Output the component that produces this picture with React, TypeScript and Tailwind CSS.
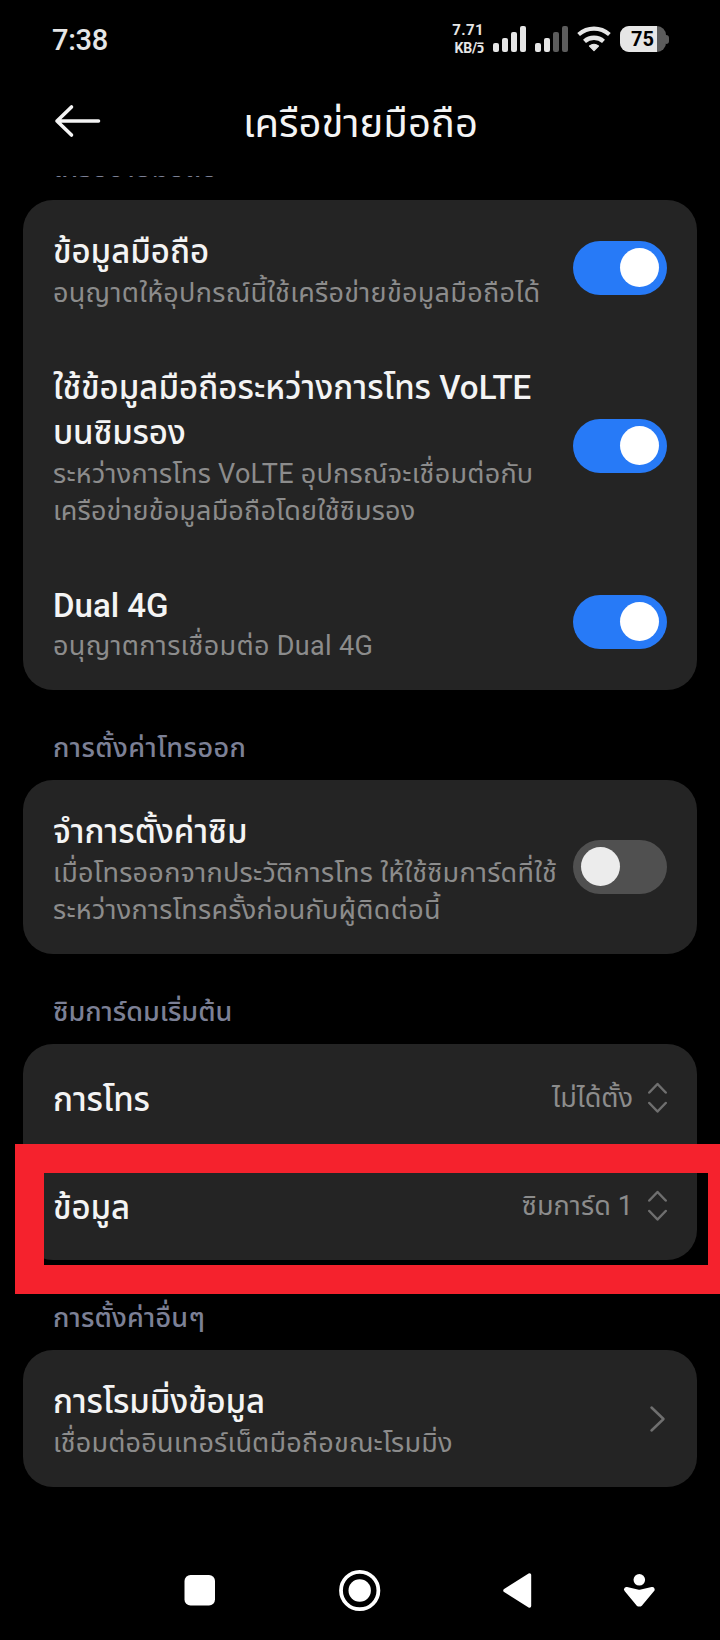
import React from 'react';

function Line({ children, className = '' }: { children: React.ReactNode; className?: string }) {
  return <div className={`whitespace-nowrap ${className}`}>{children}</div>;
}

function Toggle({ on = false, className = '' }: { on?: boolean; className?: string }) {
  return (
    <div
      role="switch"
      aria-checked={on}
      className={`flex h-[54px] w-[94px] shrink-0 rounded-full px-2 pt-[7px] ${on ? 'justify-end bg-[#277af7]' : 'justify-start bg-[#505050]'} ${className}`}
    >
      <div className={`h-[39px] w-[39px] rounded-full ${on ? 'bg-white' : 'bg-[#ececec]'}`} />
    </div>
  );
}

function UpDown() {
  return (
    <svg className="ml-[14px] h-8 w-5 shrink-0" viewBox="0 0 20 32" fill="none" stroke="#6f6f6f" strokeWidth="2.5" strokeLinecap="round" strokeLinejoin="round">
      <path d="M2.3 10.5 10.5 2 18.7 10.5M2.3 21 10.5 29.5 18.7 21" />
    </svg>
  );
}

const title = 'h-[45px] text-[33px] leading-[43px] font-medium text-[#f4f4f4]';
const sub = 'h-[37px] text-[27px] leading-[37px] text-[#8c8c8c]';
const heading = 'pl-[53px] h-[37px] text-[27px] leading-[37px] font-medium text-[#7c8096]';
const card = 'mx-[23px] rounded-[30px] bg-[#242424] pl-[30px] pr-[30px]';

export default function App() {
  return (
    <div className="relative flex h-[1640px] w-[720px] flex-col overflow-hidden bg-black font-['Roboto','Noto_Sans_Thai',sans-serif]">
      <div className="flex h-[80px] shrink-0 items-center pl-[52px] pr-[51px] text-[#e6e6e6]">
        <div className="flex-1 text-[29px] font-medium leading-[34px] tracking-[-0.3px]">7:38</div>
        <div className="flex w-[32px] flex-col items-end pb-[2px] font-bold">
          <span className="text-[15px] leading-[18px] tracking-[0.4px]">7.71</span>
          <span className="whitespace-nowrap text-[14px] leading-[18px] tracking-[-0.2px]">KB/วิ</span>
        </div>
        <svg className="ml-[9px] mb-[2px] h-[26px] w-[76px]" viewBox="0 0 76 26" fill="#e6e6e6">
          <rect x="0" y="17" width="6" height="9" rx="2" />
          <rect x="9" y="12" width="6" height="14" rx="2" />
          <rect x="18" y="6" width="6" height="20" rx="2" />
          <rect x="27" y="0" width="6" height="26" rx="2" />
          <rect x="42" y="17" width="6" height="9" rx="2" />
          <rect x="51" y="12" width="6" height="14" rx="2" />
          <rect x="60" y="6" width="6" height="20" rx="2" fill="#5c5c5c" />
          <rect x="69" y="0" width="6" height="26" rx="2" fill="#5c5c5c" />
        </svg>
        <svg className="ml-[8px] mb-[2px] h-[26px] w-[34px]" viewBox="0 0 34 26" fill="none" stroke="#e6e6e6">
          <path d="M1.6 8.5Q8.5 2.6 17 2.6T32.4 8.5" strokeWidth="4.2" />
          <path d="M7.5 15.3Q11.5 11.8 17 11.8T26.5 15.3" strokeWidth="4.4" />
          <path d="M12.5 20Q17 16.5 21.5 20L17 24.6Z" fill="#e6e6e6" strokeWidth="1.2" strokeLinejoin="round" />
        </svg>
        <div className="mb-[2px] ml-[9px] flex items-center">
          <div className="relative flex h-[26px] w-[46px] overflow-hidden rounded-[9px] bg-[#5c5c5c]">
            <div className="h-full w-[37px] bg-[#e6e6e6]" />
            <span className="absolute left-[11px] top-0 text-[20px] font-bold leading-[26px] text-black">75</span>
          </div>
          <div className="h-[9px] w-[3px] rounded-r-[3px] bg-[#5c5c5c]" />
        </div>
      </div>

      <div className="flex h-[96px] shrink-0 items-start pl-[54px]">
        <svg className="mt-[24px] h-[34px] w-[47px]" viewBox="0 0 47 34" fill="none" stroke="#f4f4f4" strokeWidth="3.6" strokeLinecap="round" strokeLinejoin="round">
          <path d="M17.5 3 3 17 17.5 31M3 17H44.5" />
        </svg>
        <Line className="ml-[142px] mt-[16px] h-[56px] text-[40px] leading-[56px] text-[#f4f4f4]">เครือข่ายมือถือ</Line>
      </div>

      <div className="flex h-[24px] shrink-0 items-start overflow-hidden">
        <Line className={`${heading} -mt-[26px] tracking-[0.3px]`}>เครือข่ายมือถือ</Line>
      </div>

      <div className={`${card} h-[490px] shrink-0`}>
        <div className="flex pt-[30px]">
          <div className="w-[520px]">
            <Line className={title}>ข้อมูลมือถือ</Line>
            <Line className={`${sub} tracking-[0.28px]`}>อนุญาตให้อุปกรณ์นี้ใช้เครือข่ายข้อมูลมือถือได้</Line>
          </div>
          <Toggle on className="mt-[11px]" />
        </div>
        <div className="flex pt-[54px]">
          <div className="w-[520px]">
            <Line className={`${title} tracking-[0.03px]`}>ใช้ข้อมูลมือถือระหว่างการโทร VoLTE</Line>
            <Line className={`${title} tracking-[-0.15px]`}>บนซิมรอง</Line>
            <Line className={`${sub} tracking-[0.25px]`}>ระหว่างการโทร VoLTE อุปกรณ์จะเชื่อมต่อกับ</Line>
            <Line className={`${sub} tracking-[0.15px]`}>เครือข่ายข้อมูลมือถือโดยใช้ซิมรอง</Line>
          </div>
          <Toggle on className="mt-[53px]" />
        </div>
        <div className="flex pt-[54px]">
          <div className="w-[520px]">
            <Line className={title}>Dual 4G</Line>
            <Line className={`${sub} -mt-px tracking-[0.32px]`}>อนุญาตการเชื่อมต่อ Dual 4G</Line>
          </div>
          <Toggle on className="mt-[11px]" />
        </div>
      </div>

      <Line className={`${heading} mt-[40px] mb-[13px] shrink-0 tracking-[0.45px]`}>การตั้งค่าโทรออก</Line>
      <div className={`${card} flex h-[174px] shrink-0 pt-[30px]`}>
        <div className="w-[520px]">
          <Line className={title}>จำการตั้งค่าซิม</Line>
          <Line className={`${sub} tracking-[0.27px]`}>เมื่อโทรออกจากประวัติการโทร ให้ใช้ซิมการ์ดที่ใช้</Line>
          <Line className={`${sub} tracking-[0.27px]`}>ระหว่างการโทรครั้งก่อนกับผู้ติดต่อนี้</Line>
        </div>
        <Toggle className="mt-[30px]" />
      </div>

      <Line className={`${heading} mt-[40px] mb-[13px] shrink-0`}>ซิมการ์ดมเริ่มต้น</Line>
      <div className={`${card} h-[216px] shrink-0`}>
        <div className="flex h-[108px] items-center">
          <Line className={`${title} flex-1 pt-[2px] tracking-[-0.1px]`}>การโทร</Line>
          <Line className={sub}>ไม่ได้ตั้ง</Line>
          <UpDown />
        </div>
        <div className="flex h-[108px] items-center">
          <Line className={`${title} flex-1 pt-[2px] tracking-[-0.1px]`}>ข้อมูล</Line>
          <Line className={`${sub} tracking-[0.1px]`}>ซิมการ์ด 1</Line>
          <UpDown />
        </div>
      </div>

      <Line className={`${heading} mt-[40px] mb-[13px] shrink-0 tracking-[0.2px]`}>การตั้งค่าอื่นๆ</Line>
      <div className={`${card} flex h-[137px] shrink-0 pt-[30px]`}>
        <div className="flex-1">
          <Line className={`${title} tracking-[-0.1px]`}>การโรมมิ่งข้อมูล</Line>
          <Line className={`${sub} tracking-[0.17px]`}>เชื่อมต่ออินเทอร์เน็ตมือถือขณะโรมมิ่ง</Line>
        </div>
        <svg className="mt-[25px] h-[28px] w-[18px]" viewBox="0 0 18 28" fill="none" stroke="#6f6f6f" strokeWidth="2.5" strokeLinecap="round" strokeLinejoin="round">
          <path d="M2.5 2.5 14.5 14 2.5 25.5" />
        </svg>
      </div>

      <div className="mt-[63px] flex h-[80px] items-center">
        <svg className="h-[80px] w-[720px]" viewBox="0 1550 720 80" fill="#fff">
          <rect x="184.5" y="1575" width="30.5" height="30.5" rx="6" />
          <circle cx="359.7" cy="1590.5" r="18.7" fill="none" stroke="#fff" strokeWidth="3.8" />
          <circle cx="359.7" cy="1590.5" r="11.2" />
          <path d="M505 1590.5 529.5 1575V1606Z" stroke="#fff" strokeWidth="3.4" strokeLinejoin="round" />
          <circle cx="639.3" cy="1579.8" r="5.8" />
          <path d="M626.5 1589.5 639.3 1592.5 652.2 1589.5 640.5 1603.5Q639.3 1604.5 638.1 1603.5Z" stroke="#fff" strokeWidth="5" strokeLinejoin="round" />
        </svg>
      </div>

      <div className="absolute left-[15px] top-[1144px] h-[150px] w-[722px] border-[29px] border-[#f5222d]" />
    </div>
  );
}
